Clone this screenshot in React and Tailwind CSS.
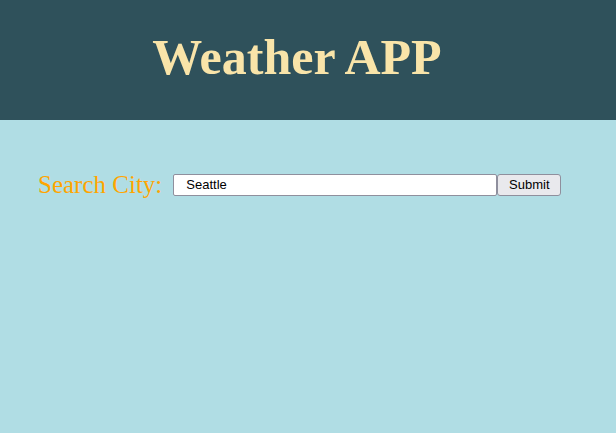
import React, { useState } from 'react';

const App = () => {
    const [city, setCity] = useState('Seattle');

    return (
        <div className="min-h-[433px] w-full bg-[#b0dde4]">
            {/* Header */}
            <header className="h-[120px] bg-[#2f515b] flex items-center justify-center pr-[22px]">
                <h1 className="text-[50px] font-bold text-[#f9e4a9] leading-none font-['Liberation_Serif',serif] pb-[6px]">
                    Weather APP
                </h1>
            </header>

            {/* Search */}
            <form className="flex items-center pl-[38px] pt-[52px]" onSubmit={e => e.preventDefault()}>
                <label className="text-[25px] text-[#ffa500] font-['Liberation_Serif',serif] leading-none mr-[11px]">
                    Search City:
                </label>
                <input
                    value={city}
                    onChange={e => setCity(e.target.value)}
                    className="w-[324px] h-[22px] bg-white border border-[#8f8f9d] rounded-[2px] pl-[12px] text-[13px] text-black font-['Liberation_Sans',sans-serif] outline-none"
                />
                <button className="w-[64px] h-[22px] bg-[#e9e9ed] border border-[#8f8f9d] rounded-[3px] text-[13px] text-black font-['Liberation_Sans',sans-serif]">
                    Submit
                </button>
            </form>
        </div>
    );
};

export default App;
